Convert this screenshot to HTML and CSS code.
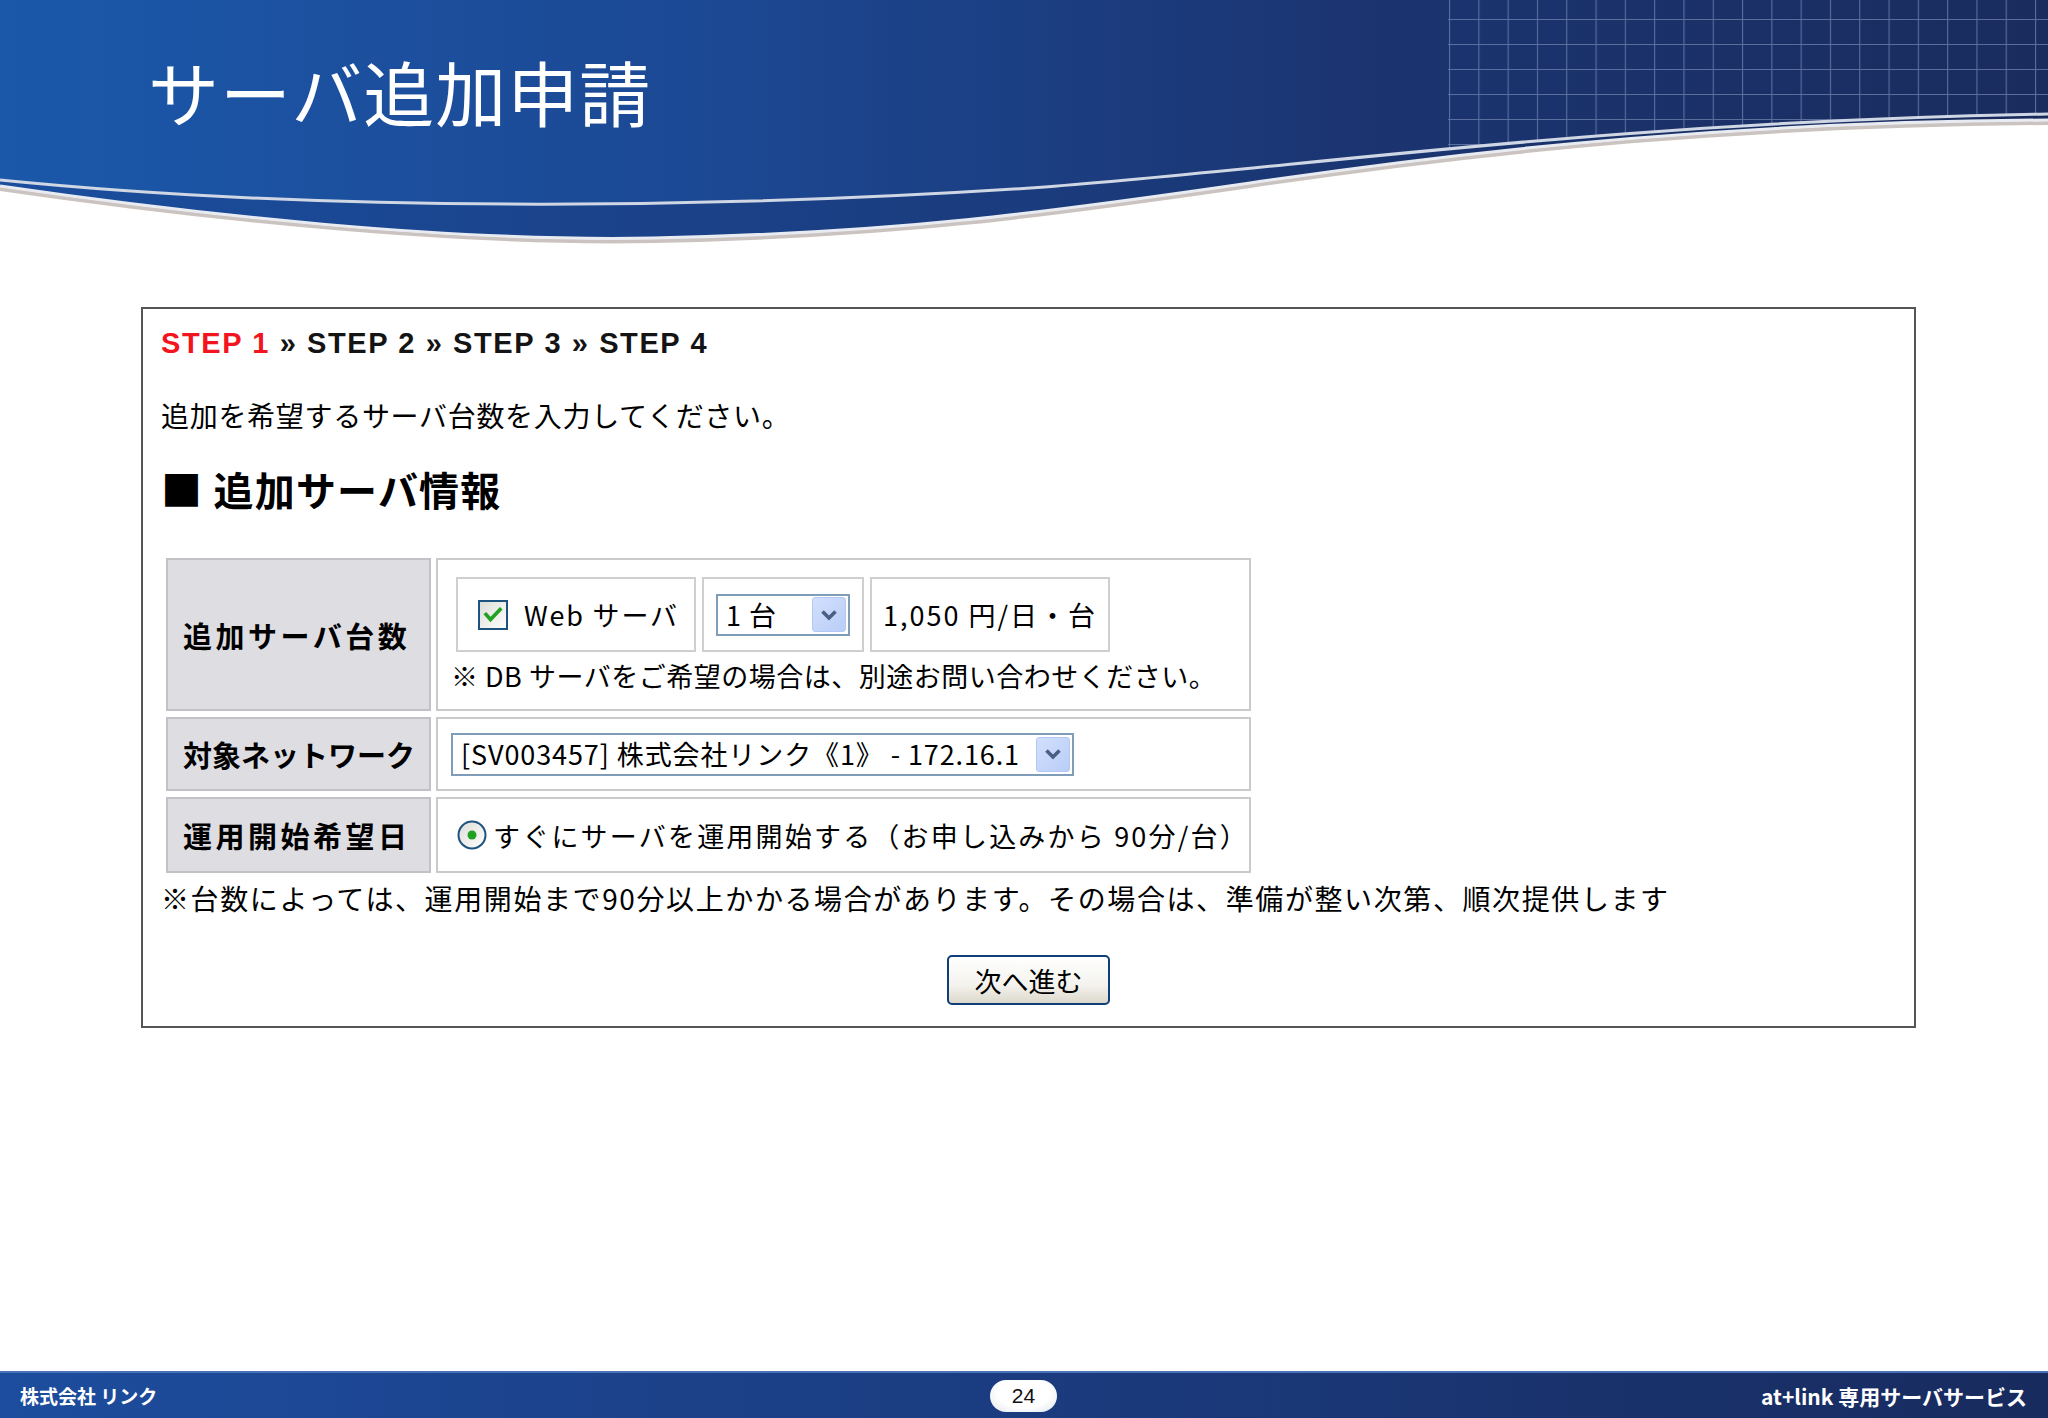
FILE: index.html
```html
<!DOCTYPE html>
<html lang="ja">
<head>
<meta charset="utf-8">
<title>サーバ追加申請</title>
<link rel="stylesheet" href="styles.css">
</head>
<body>
<header class="hero">
  <svg class="hero-art" width="2048" height="260" viewBox="0 0 2048 260" aria-hidden="true">
    <defs>
      <linearGradient id="gMain" x1="0" x2="1" y1="0" y2="0">
        <stop offset="0" stop-color="#1b58aa"/>
        <stop offset="0.35" stop-color="#1c4893"/>
        <stop offset="0.65" stop-color="#1b3572"/>
        <stop offset="1" stop-color="#1a2c5e"/>
      </linearGradient>
      <linearGradient id="gBand" x1="0" x2="1" y1="0" y2="0">
        <stop offset="0" stop-color="#1a4e9e"/>
        <stop offset="0.4" stop-color="#1b3f84"/>
        <stop offset="1" stop-color="#182a5a"/>
      </linearGradient>
      <clipPath id="clipTop">
        <path d="M0,180 C350,215 750,207 1045,187 C1300,168 1600,122 2048,114 V0 H0 Z"/>
      </clipPath>
      <pattern id="grid" x="1449" y="19" width="29.3" height="25" patternUnits="userSpaceOnUse">
        <path d="M0.5,0 V25 M0,0.5 H29.3" stroke="#8ea0c8" stroke-opacity="0.55" stroke-width="1.2" fill="none"/>
      </pattern>
    </defs>
    <path d="M0,186 C200,215 450,242 653,238 C900,233 1050,212 1250,183 C1500,146 1750,122 2048,120 V0 H0 Z" fill="url(#gBand)"/>
    <path d="M0,180 C350,215 750,207 1045,187 C1300,168 1600,122 2048,114 V0 H0 Z" fill="url(#gMain)"/>
    <rect x="1448" y="0" width="600" height="200" fill="url(#grid)" clip-path="url(#clipTop)"/>
    <path d="M0,180 C350,215 750,207 1045,187 C1300,168 1600,122 2048,114" fill="none" stroke="#cfd6e4" stroke-width="3"/>
    <path d="M0,189 C200,218 450,245 653,241 C900,236 1050,215 1250,186 C1500,149 1750,125 2048,123" fill="none" stroke="#8a7a70" stroke-opacity="0.45" stroke-width="4"/>
    <path d="M0,186 C200,215 450,242 653,238 C900,233 1050,212 1250,183 C1500,146 1750,122 2048,120" fill="none" stroke="#e8ebf1" stroke-width="3"/>
  </svg>
  <h1 class="hero-title">サーバ追加申請</h1>
</header>

<main class="page">
  <section class="panel">
    <p class="steps"><span class="step-current">STEP 1</span> » STEP 2 » STEP 3 » STEP 4</p>
    <p class="lead">追加を希望するサーバ台数を入力してください。</p>
    <h2 class="section-title"><span class="sq">■</span> 追加サーバ情報</h2>

    <table class="form">
      <tr class="row-count">
        <th>追加サーバ台数</th>
        <td>
          <div class="opts">
            <div class="opt opt-check">
              <svg class="checkbox" width="30" height="30" viewBox="0 0 30 30" aria-hidden="true">
                <defs>
                  <linearGradient id="gChk" x1="0" y1="0" x2="1" y2="1">
                    <stop offset="0" stop-color="#dcdcd6"/>
                    <stop offset="1" stop-color="#ffffff"/>
                  </linearGradient>
                </defs>
                <rect x="1" y="1" width="28" height="28" fill="url(#gChk)" stroke="#1c5180" stroke-width="2"/>
                <path d="M8,14.5 L12.5,19.5 L22,9.5" fill="none" stroke="#21a121" stroke-width="3.6" stroke-linecap="square"/>
              </svg>
              <span>Web サーバ</span>
            </div>
            <div class="opt opt-select">
              <div class="combo combo-sm">
                <span class="combo-text">1 台</span>
                <span class="combo-btn">
                  <svg width="22" height="22" viewBox="0 0 22 22" aria-hidden="true"><path d="M4.5,7.5 L11,14 L17.5,7.5" fill="none" stroke="#4a5e86" stroke-width="3.6"/></svg>
                </span>
              </div>
            </div>
            <div class="opt opt-price">1,050 円/日・台</div>
          </div>
          <p class="note">※ DB サーバをご希望の場合は、別途お問い合わせください。</p>
        </td>
      </tr>
      <tr class="row-net">
        <th class="label-tight">対象ネットワーク</th>
        <td>
          <div class="combo combo-lg">
            <span class="combo-text">[SV003457] 株式会社リンク《1》 - 172.16.1</span>
            <span class="combo-btn">
              <svg width="22" height="22" viewBox="0 0 22 22" aria-hidden="true"><path d="M4.5,7.5 L11,14 L17.5,7.5" fill="none" stroke="#4a5e86" stroke-width="3.6"/></svg>
            </span>
          </div>
        </td>
      </tr>
      <tr class="row-date">
        <th>運用開始希望日</th>
        <td>
          <div class="radio-line">
            <svg class="radio" width="32" height="32" viewBox="0 0 32 32" aria-hidden="true">
              <defs>
                <linearGradient id="gRad" x1="0" y1="0" x2="1" y2="1">
                  <stop offset="0" stop-color="#dcdcd6"/>
                  <stop offset="1" stop-color="#ffffff"/>
                </linearGradient>
              </defs>
              <circle cx="16" cy="16" r="13.5" fill="url(#gRad)" stroke="#1c5180" stroke-width="2"/>
              <circle cx="16" cy="16" r="4.5" fill="#21a121"/>
            </svg>
            <span class="radio-text">すぐにサーバを運用開始する（お申し込みから 90分/台）</span>
          </div>
        </td>
      </tr>
    </table>

    <p class="foot-note">※台数によっては、運用開始まで90分以上かかる場合があります。その場合は、準備が整い次第、順次提供します</p>

    <div class="actions">
      <button class="btn" type="button">次へ進む</button>
    </div>
  </section>
</main>

<footer class="footer">
  <span class="footer-left">株式会社 リンク</span>
  <span class="page-pill">24</span>
  <span class="footer-right">at+link 専用サーバサービス</span>
</footer>
</body>
</html>
```

FILE: styles.css
```css
* {
  box-sizing: border-box;
}

html, body {
  margin: 0;
  padding: 0;
}

body {
  width: 2048px;
  height: 1418px;
  background: #ffffff;
  font-family: "Noto Sans CJK JP", "Noto Sans", sans-serif;
  color: #000;
  display: flex;
  flex-direction: column;
  overflow: hidden;
}

/* ---------- header ---------- */
.hero {
  position: relative;
  height: 260px;
  flex: none;
}

.hero-art {
  display: block;
}

.hero-title {
  position: absolute;
  left: 148px;
  top: 50px;
  margin: 0;
  font-size: 71px;
  line-height: 80px;
  font-weight: 400;
  color: #ffffff;
  letter-spacing: 1px;
  white-space: nowrap;
}

/* ---------- main panel ---------- */
.page {
  flex: none;
  padding: 47px 0 0 141px;
}

.panel {
  width: 1775px;
  height: 721px;
  border: 2px solid #555555;
  padding: 16px 18px 0 18px;
}

.steps {
  margin: 0;
  font-family: "Liberation Sans", "Noto Sans CJK JP", sans-serif;
  font-weight: 700;
  font-size: 29px;
  line-height: 36px;
  letter-spacing: 1.6px;
  color: #141414;
}

.step-current {
  color: #f2141e;
}

.lead {
  margin: 36px 0 0 0;
  font-size: 28px;
  line-height: 36px;
  letter-spacing: 0.7px;
}

.section-title {
  margin: 31px 0 0 0;
  font-size: 40px;
  line-height: 48px;
  font-weight: 700;
  letter-spacing: 1.2px;
}

.sq {
  font-size: 41px;
}

/* ---------- form table ---------- */
.form {
  margin-top: 39px;
  border-collapse: separate;
  border-spacing: 5px 6px;
}

.form th {
  width: 265px;
  padding: 0 0 0 15px;
  background: #dedde2;
  border: 2px solid #c2c2c6;
  text-align: left;
  font-size: 29px;
  font-weight: 700;
  letter-spacing: 3.5px;
  vertical-align: middle;
  white-space: nowrap;
}

.form th.label-tight {
  letter-spacing: 0;
}

.form td {
  width: 814px;
  padding: 0 0 0 13px;
  border: 2px solid #cacaca;
  vertical-align: middle;
  font-size: 27px;
}

.row-count th,
.row-count td {
  height: 153px;
}

.row-count td {
  vertical-align: top;
  padding-top: 17px;
}

.row-net th,
.row-net td {
  height: 74px;
}

.row-date th,
.row-date td {
  height: 76px;
}

.opts {
  display: flex;
  gap: 6px;
  padding-left: 5px;
}

.opt {
  height: 75px;
  border: 2px solid #cfcfcf;
  display: flex;
  align-items: center;
  white-space: nowrap;
  letter-spacing: 1px;
}

.opt-check {
  width: 240px;
  padding-left: 20px;
  gap: 16px;
}

.opt-check span {
  letter-spacing: 1.8px;
}

.opt-select {
  width: 162px;
  padding-left: 12px;
}

.opt-price {
  width: 240px;
  padding-left: 11px;
  letter-spacing: 2px;
}

.note {
  margin: 7px 0 0 0;
  font-size: 27px;
  line-height: 34px;
  letter-spacing: 0.5px;
  white-space: nowrap;
}

/* combo box (XP style) */
.combo {
  display: flex;
  align-items: center;
  border: 2px solid #7f9db9;
  background: #ffffff;
  padding: 0 2px 0 8px;
}

.combo-sm {
  width: 134px;
  height: 42px;
}

.combo-lg {
  width: 623px;
  height: 43px;
}

.combo-text {
  flex: 1;
  white-space: nowrap;
  font-size: 27px;
  line-height: 36px;
}

.combo-lg .combo-text {
  letter-spacing: 0.9px;
}

.combo-btn {
  width: 34px;
  height: 35px;
  border-radius: 3px;
  background: linear-gradient(135deg, #d3e0fd 0%, #b8cdf7 100%);
  border: 1px solid #b4c8f5;
  display: flex;
  align-items: center;
  justify-content: center;
}

.combo-btn svg {
  display: block;
}

.radio-line {
  display: flex;
  align-items: center;
  gap: 5px;
  padding-left: 5px;
  white-space: nowrap;
}

.radio {
  display: block;
}

.radio-text {
  letter-spacing: 2.2px;
}

/* ---------- notes & actions ---------- */
.foot-note {
  margin: 1px 0 0 0;
  font-size: 28px;
  line-height: 36px;
  letter-spacing: 1.6px;
  white-space: nowrap;
}

.actions {
  display: flex;
  justify-content: center;
  margin-top: 39px;
}

.btn {
  width: 163px;
  height: 50px;
  border: 2px solid #0f3e78;
  border-radius: 5px;
  background: linear-gradient(#ffffff 0%, #f4f3ee 60%, #dcd8cc 100%);
  font-family: "Noto Sans CJK JP", sans-serif;
  font-size: 27px;
  color: #000;
  padding: 0;
}

/* ---------- footer ---------- */
.footer {
  margin-top: auto;
  height: 47px;
  flex: none;
  display: grid;
  grid-template-columns: 1fr auto 1fr;
  align-items: center;
  padding: 0 21px 0 20px;
  background: linear-gradient(90deg, #1d4d9e 0%, #1b3d82 45%, #182b5e 100%);
  border-top: 2px solid #4a72b8;
  color: #ffffff;
  font-weight: 700;
}

.footer-left {
  font-size: 19px;
  justify-self: start;
}

.page-pill {
  width: 67px;
  height: 32px;
  border-radius: 16px;
  background: radial-gradient(ellipse at 50% 40%, #ffffff 55%, #dfe3ea 100%);
  color: #111;
  font-family: "Liberation Sans", sans-serif;
  font-weight: 400;
  font-size: 21px;
  display: flex;
  align-items: center;
  justify-content: center;
}

.footer-right {
  justify-self: end;
  font-size: 21px;
}
```
